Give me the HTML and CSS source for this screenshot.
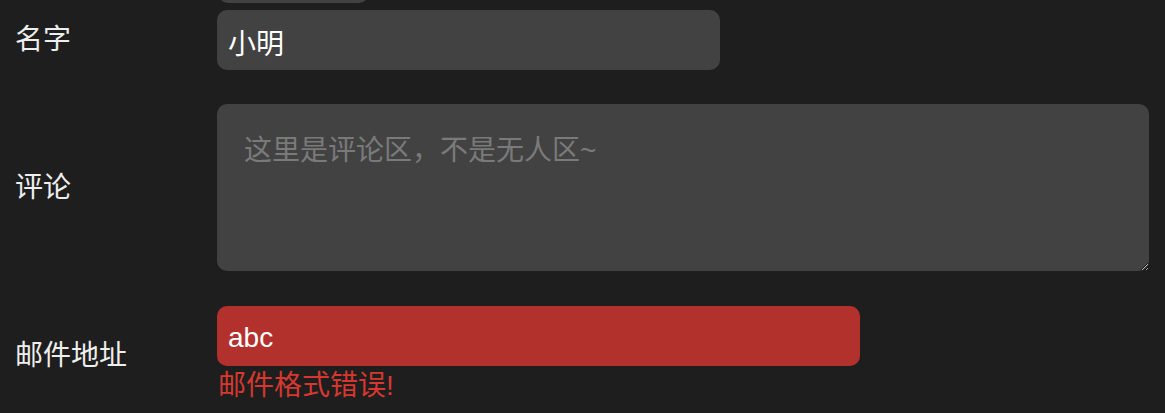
FILE: index.html
```html
<!DOCTYPE html>
<html lang="zh-CN">
<head>
<meta charset="utf-8">
<title>表单</title>
<link rel="stylesheet" href="styles.css">
</head>
<body>
<form class="form">
  <div class="row row-top">
    <span class="label"></span>
    <div class="clip"><div class="prev-box"></div></div>
  </div>
  <div class="row row-name">
    <label class="label" for="name">名字</label>
    <input class="field field-name" id="name" type="text" value="小明">
  </div>
  <div class="row row-comment">
    <label class="label" for="comment">评论</label>
    <textarea class="field field-comment" id="comment" placeholder="这里是评论区，不是无人区~"></textarea>
  </div>
  <div class="row row-email">
    <label class="label" for="email">邮件地址</label>
    <div class="group">
      <input class="field field-email" id="email" type="text" value="abc">
      <div class="error">邮件格式错误!</div>
    </div>
  </div>
</form>
</body>
</html>
```

FILE: styles.css
```css
* { box-sizing: border-box; }

html, body {
  margin: 0;
  padding: 0;
  background: #1e1e1e;
  height: 100%;
  overflow: hidden;
}

body {
  font-family: "Liberation Sans", "Noto Sans CJK SC", sans-serif;
  font-size: 28px;
  color: #eeeeee;
}

.form {
  display: flex;
  flex-direction: column;
  padding: 0 16px 0 15px;
}

.row {
  display: grid;
  grid-template-columns: 202px 1fr;
  align-items: center;
}

.row-name { margin-top: 7px; }
.row-comment { margin-top: 34px; }
.row-email { margin-top: 35px; }

.label {
  line-height: 40px;
  color: #eeeeee;
}

.clip {
  height: 3px;
  overflow: hidden;
  display: flex;
  align-items: flex-end;
}

.prev-box {
  flex: none;
  width: 151px;
  height: 40px;
  margin-left: 1px;
  background: #424242;
  border-radius: 10px;
}

.field {
  display: block;
  font: inherit;
  color: #ffffff;
  background: #424242;
  border: none;
  border-radius: 10px;
  outline: none;
  margin: 0;
}

.field-name {
  width: 503px;
  height: 60px;
  padding: 4px 11px 0;
  line-height: 56px;
}

.field-comment {
  width: 100%;
  height: 167px;
  padding: 27px 27px 23px;
  line-height: 40px;
  resize: both;
}

.field-comment::placeholder {
  color: #7a7a7a;
}

.field-email {
  width: 643px;
  height: 60px;
  padding: 3px 11px 0;
  line-height: 57px;
  background: #b3312c;
}

.error {
  line-height: 39px;
  color: #d6382f;
  padding-left: 1px;
}
```
